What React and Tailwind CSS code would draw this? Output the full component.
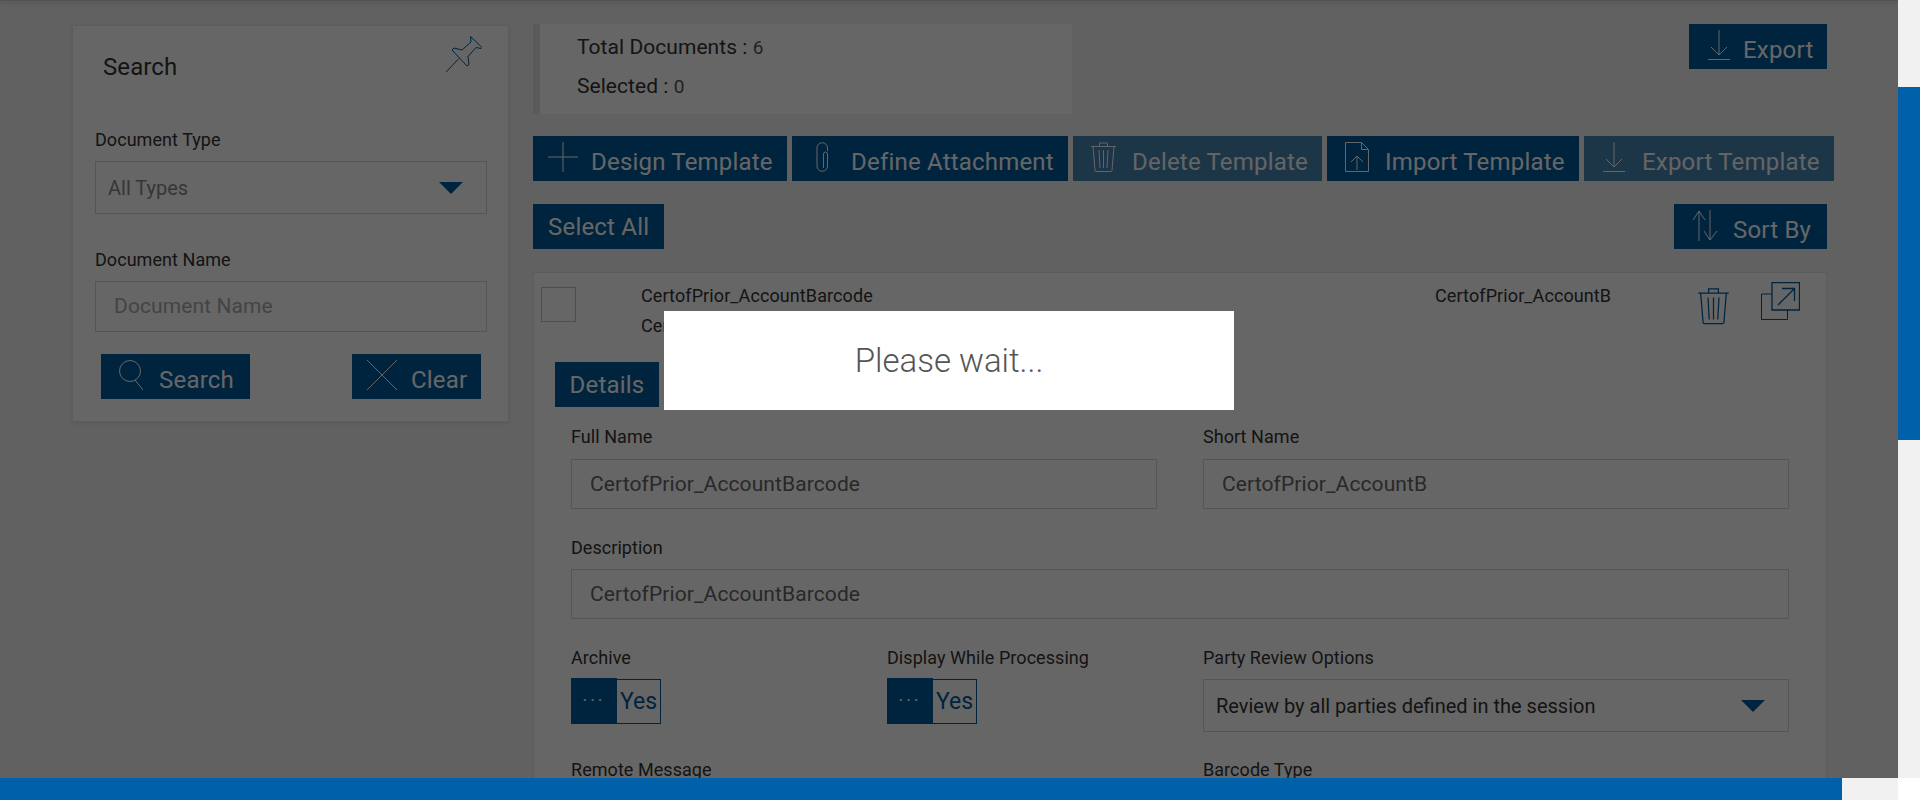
const btnCls = 'flex h-[45px] shrink-0 items-start bg-[#005a9c] pt-[6px] text-[24px] tracking-[0.2px] text-white'
const labelCls = 'block h-[22px] text-[18px] leading-[22px] tracking-[0.05px] text-[#333]'
const fieldCls = 'flex h-[50px] items-center border border-[#d4d4d4] pl-[18px] pt-px text-[21px] tracking-[0.1px] text-[#666]'
const lineIcon = { fill: 'none', stroke: 'currentColor', strokeWidth: 1 }

function IconPlus() {
  return (
    <svg width="30" height="30" viewBox="0 0 30 30" {...lineIcon}>
      <path d="M15 0v30M0 15h30" />
    </svg>
  )
}

function IconClip() {
  return (
    <svg width="13" height="30" viewBox="0 0 13 30" {...lineIcon}>
      <path d="M11.500 9V6A5.250 5.250 0 0 0 1 6v18a5.250 5.250 0 0 0 10.500 0V12a2 2 0 0 0-4 0v14" />
    </svg>
  )
}

function IconTrash({ w = 27, h = 30, color = 'currentColor' }) {
  return (
    <svg width={w} height={h} viewBox="0 0 27 30" fill="none" stroke={color} strokeWidth="1">
      <path d="M1 4.500h25M3 4.500l2 24c0 .7.500 1 1 1h15c.5 0 1-.3 1-1l2-24M9.500 4.500V1h8v3.500M9 8l1 18M13.500 8v18M18 8l-1 18" />
    </svg>
  )
}

function IconImport() {
  return (
    <svg width="24" height="30" viewBox="0 0 24 30" {...lineIcon}>
      <path d="M.5.500h16l7 7v22H.5zM16.500.500v7h7M12 28V14M6 20l6-6 6 6" />
    </svg>
  )
}

function IconDownload() {
  return (
    <svg width="22" height="30" viewBox="0 0 22 30" {...lineIcon}>
      <path d="M11 0v25M3 17l8 8 8-8M0 29.500h22" />
    </svg>
  )
}

function IconSort() {
  return (
    <svg width="26" height="31" viewBox="0 0 26 31" {...lineIcon}>
      <path d="M7 31V1M1 10l6-9 6 9M18 0v30M12 21l6 9 7-9" />
    </svg>
  )
}

function IconSearch() {
  return (
    <svg width="24" height="30" viewBox="0 0 24 30" {...lineIcon}>
      <circle cx="11" cy="11" r="10.500" />
      <path d="M16 20l8 10" />
    </svg>
  )
}

function IconClose() {
  return (
    <svg width="30" height="30" viewBox="0 0 30 30" {...lineIcon}>
      <path d="M0 0l30 30M30 0L0 30" />
    </svg>
  )
}

function IconPin() {
  return (
    <svg width="36" height="36" viewBox="0 0 36 36" fill="none" stroke="#005a9c" strokeWidth="1">
      <path d="M24.500 .5L36 11.500l-1 1-5-1-8 9 1 8-2 1.500L6 14l2-2 8 2 9-8z" />
      <path d="M13 22.500L0 36" />
    </svg>
  )
}

function IconPopout() {
  return (
    <svg width="39" height="38" viewBox="0 0 39 38" fill="none" stroke="#005a9c" strokeWidth="1">
      <path d="M11 12H.5v25.500h26V28" />
      <path d="M11 .5h27.500V28H11zM17 23L33 7M21 6.500h12.500V19" strokeWidth="1.300" />
    </svg>
  )
}

function Caret() {
  return <span className="h-0 w-0 border-x-[12px] border-t-[12px] border-x-transparent border-t-[#005a9c]" />
}

function Toggle() {
  return (
    <div className="mt-[9px] flex h-[46px] w-[90px] items-stretch">
      <div className="flex w-[46px] items-center justify-center bg-[#005a9c] pb-[2px] text-[18px] tracking-[3px] text-white">
        ···
      </div>
      <div className="mt-px flex flex-1 items-center justify-center border border-l-0 border-[#005a9c] pt-[2px] text-[23px] text-[#005a9c]">
        Yes
      </div>
    </div>
  )
}

export default function App() {
  return (
    <div className="flex h-[800px] w-[1920px] flex-col overflow-hidden bg-white font-['Roboto',sans-serif]">
      <div className="flex h-[778px]">
        <main className="relative w-[1898px] overflow-hidden bg-[#f2f2f2]">
          <div className="h-px bg-[#ccc] shadow-[0_1px_5px_rgba(0,0,0,0.35)]" />
          <div className="flex">
            {/* panel de busqueda */}
            <aside className="relative ml-[72px] mt-[24px] h-[397px] w-[437px] shrink-0 border border-[#e8e8e8] bg-white pl-[22px] pr-[21px] shadow-[0_1px_3px_rgba(0,0,0,0.1)]">
              <div className="absolute right-[26px] top-[10px]">
                <IconPin />
              </div>
              <h2 className="ml-[8px] mt-[26px] h-[30px] text-[24px] font-normal leading-[30px] tracking-[0.1px] text-[#333]">Search</h2>
              <label className={`${labelCls} mt-[47px]`}>Document Type</label>
              <div className="mt-[10px] flex h-[53px] items-center justify-between border border-[#d4d4d4] pl-[12px] pr-[23px] text-[20px] text-[#888]">
                All Types
                <Caret />
              </div>
              <label className={`${labelCls} mt-[35px]`}>Document Name</label>
              <div className={`${fieldCls} mt-[10px] h-[51px] text-[19px] text-[#aaa]`}>Document Name</div>
              <div className="ml-[6px] mr-[6px] mt-[22px] flex justify-between">
                <button className={`${btnCls} w-[149px] pl-[18px]`}>
                  <IconSearch />
                  <span className="ml-[16px] mt-[3px] leading-[34px]">Search</span>
                </button>
                <button className={`${btnCls} w-[129px] pl-[15px]`}>
                  <IconClose />
                  <span className="ml-[14px] mt-[3px] leading-[34px]">Clear</span>
                </button>
              </div>
            </aside>

            <section className="ml-[24px] mt-[23px] w-[1301px] shrink-0">
              <div className="flex justify-between pr-[7px]">
                <div className="h-[90px] w-[539px] border-l-[7px] border-[#e0e0e0] bg-white pl-[37px] text-[21px] leading-[38px] tracking-[0.05px] text-[#333]">
                  <p className="mt-[4px]">
                    Total Documents : <span className="text-[19px] text-[#555]">6</span>
                  </p>
                  <p>
                    Selected : <span className="text-[19px] text-[#555]">0</span>
                  </p>
                </div>
                <button className={`${btnCls} w-[138px] pl-[19px]`}>
                  <IconDownload />
                  <span className="ml-[13px] mt-[3px] leading-[34px]">Export</span>
                </button>
              </div>

              <div className="mt-[22px] flex gap-[5px]">
                <button className={`${btnCls} w-[254px] pl-[15px]`}>
                  <IconPlus />
                  <span className="ml-[13px] mt-[3px] leading-[34px]">Design Template</span>
                </button>
                <button className={`${btnCls} w-[276px] pl-[24px]`}>
                  <IconClip />
                  <span className="ml-[22px] mt-[3px] leading-[34px]">Define Attachment</span>
                </button>
                <button className={`${btnCls} w-[249px] pl-[17px] opacity-70`}>
                  <IconTrash />
                  <span className="ml-[15px] mt-[3px] leading-[34px]">Delete Template</span>
                </button>
                <button className={`${btnCls} w-[252px] pl-[18px]`}>
                  <IconImport />
                  <span className="ml-[16px] mt-[3px] leading-[34px]">Import Template</span>
                </button>
                <button className={`${btnCls} w-[250px] pl-[19px] opacity-70`}>
                  <IconDownload />
                  <span className="ml-[17px] mt-[3px] leading-[34px]">Export Template</span>
                </button>
              </div>

              <div className="mt-[23px] flex justify-between pr-[7px]">
                <button className={`${btnCls} w-[131px] pl-[15px]`}>
                  <span className="leading-[34px]">Select All</span>
                </button>
                <button className={`${btnCls} w-[153px] items-start pl-[18px] pt-[5px]`}>
                  <IconSort />
                  <span className="ml-[15px] mt-[3px] leading-[34px]">Sort By</span>
                </button>
              </div>

              <div className="mt-[23px] h-[600px] w-[1294px] border border-[#e4e4e4] bg-white">
                <div className="relative flex h-[89px] items-start">
                  <div className="ml-[7px] mt-[14px] h-[35px] w-[35px] border border-[#c4c4c4]" />
                  <div className="ml-[65px] mt-[8px] text-[18px] leading-[30px] tracking-[0.1px] text-[#333]">
                    <p>CertofPrior_AccountBarcode</p>
                    <p>CertofPrior_AccountBarcode</p>
                  </div>
                  <p className="absolute left-[901px] top-[8px] text-[18px] leading-[30px] tracking-[0.1px] text-[#333]">
                    CertofPrior_AccountB
                  </p>
                  <div className="absolute left-[1163px] top-[14px]">
                    <IconTrash w={33} h={38} color="#005a9c" />
                  </div>
                  <div className="absolute left-[1227px] top-[9px]">
                    <IconPopout />
                  </div>
                </div>

                <button className={`${btnCls} ml-[21px] w-[104px] justify-center`}>
                  <span className="leading-[34px]">Details</span>
                </button>

                <div className="ml-[37px] w-[1218px]">
                  <div className="mt-[19px] grid grid-cols-[586px_586px] gap-x-[46px]">
                    <div>
                      <label className={labelCls}>Full Name</label>
                      <div className={`${fieldCls} mt-[11px]`}>CertofPrior_AccountBarcode</div>
                    </div>
                    <div>
                      <label className={labelCls}>Short Name</label>
                      <div className={`${fieldCls} mt-[11px]`}>CertofPrior_AccountB</div>
                    </div>
                  </div>

                  <label className={`${labelCls} mt-[28px]`}>Description</label>
                  <div className={`${fieldCls} mt-[10px]`}>CertofPrior_AccountBarcode</div>

                  <div className="mt-[28px] grid grid-cols-[316px_316px_586px]">
                    <div>
                      <label className={labelCls}>Archive</label>
                      <Toggle />
                    </div>
                    <div>
                      <label className={labelCls}>Display While Processing</label>
                      <Toggle />
                    </div>
                    <div>
                      <label className={labelCls}>Party Review Options</label>
                      <div className="mt-[10px] flex h-[53px] items-center justify-between border border-[#d4d4d4] pl-[12px] pr-[23px] text-[20px] text-[#333]">
                        Review by all parties defined in the session
                        <Caret />
                      </div>
                    </div>
                  </div>

                  <div className="mt-[27px] grid grid-cols-[632px_586px]">
                    <label className={labelCls}>Remote Message</label>
                    <label className={labelCls}>Barcode Type</label>
                  </div>
                </div>
              </div>
            </section>
          </div>

          {/* overlay de carga */}
          <div className="absolute inset-0 bg-black/60" />
          <div className="absolute left-[664px] top-[311px] flex h-[99px] w-[570px] items-center justify-center bg-white text-[33px] font-light text-[#555]">
            Please wait...
          </div>
        </main>

        <div className="w-[22px] bg-[#f1f1f1] pt-[87px]">
          <div className="h-[353px] bg-[#0060a9]" />
        </div>
      </div>

      <footer className="flex h-[22px]">
        <div className="w-[1842px] bg-[#0060a9]" />
        <div className="w-[56px] bg-[#f1f1f1]" />
      </footer>
    </div>
  )
}
